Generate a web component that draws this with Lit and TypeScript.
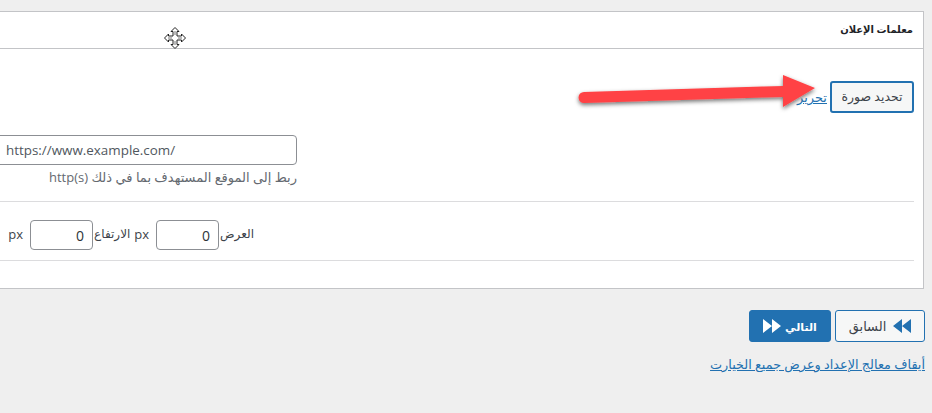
import { LitElement, html, css } from 'lit';
import { customElement } from 'lit/decorators.js';

@customElement('app-root')
export default class AppRoot extends LitElement {
  static styles = css`
    :host {
      display: block;
      position: relative;
      width: 932px;
      height: 413px;
      overflow: hidden;
      background: #efefef;
      font-family: "Open Sans", "DejaVu Sans", sans-serif;
      font-size: 13px;
      color: #3c434a;
    }

    .page {
      direction: rtl;
      padding: 11px 8px 0 0;
    }

    .panel {
      margin-left: -10px;
      height: 278px;
      box-sizing: border-box;
      background: #fff;
      border: 1px solid #c3c4c7;
    }

    .panel-head {
      height: 37px;
      box-sizing: border-box;
      padding: 8px 10px 0 0;
      border-bottom: 1px solid #c3c4c7;
      font-size: 10px;
      font-weight: 700;
      line-height: 18px;
      color: #1d2327;
    }

    .panel-body {
      padding: 32px 9px 0 0;
    }

    .image-row {
      display: flex;
      align-items: center;
      gap: 3px;
      height: 32px;
    }

    .btn {
      display: inline-flex;
      align-items: center;
      justify-content: center;
      box-sizing: border-box;
      border-radius: 3px;
      border: 1px solid #2271b1;
      background: #f6f7f7;
      color: #2271b1;
      font: inherit;
      line-height: 1;
    }

    .image-btn {
      width: 84px;
      height: 32px;
      border-width: 2px;
      color: #3c434a;
      font-size: 12.500px;
    }

    a {
      color: #2271b1;
      text-decoration: underline;
    }

    .url-field {
      margin: 22px 617px 0 0;
      padding-bottom: 15px;
    }

    .text-input {
      box-sizing: border-box;
      display: block;
      direction: ltr;
      width: 307px;
      height: 30px;
      margin-left: -10px;
      padding: 0 8px 0 15px;
      border: 1px solid #8c8f94;
      border-radius: 4px;
      background: #fff;
      color: #50575e;
      font: inherit;
      font-size: 13.400px;
    }

    .hint {
      margin-top: 3px;
      font-size: 13px;
      line-height: 18px;
      color: #646970;
    }

    .size-row {
      display: flex;
      align-items: center;
      box-sizing: border-box;
      height: 60px;
      padding: 8px 660px 0 0;
      border-top: 1px solid #dcdcde;
      border-bottom: 1px solid #dcdcde;
      font-size: 12px;
      white-space: nowrap;
    }

    .size-row span {
      margin-top: -3px;
    }

    .num {
      box-sizing: border-box;
      width: 63px;
      height: 30px;
      margin: 0 1px;
      padding: 0 8px;
      border: 1px solid #8c8f94;
      border-radius: 4px;
      background: #fff;
      color: #2c3338;
      font: inherit;
      font-size: 14px;
      text-align: right;
      direction: ltr;
    }

    .unit {
      margin: 0 6px 0 8px;
      font-size: 13px;
    }

    .size-row .unit + span {
      margin-right: -4px;
    }

    .nav {
      display: flex;
      gap: 4px;
      margin: 21px -1px 0 0;
    }

    .nav .btn {
      height: 32px;
      font-size: 13px;
    }

    .prev {
      width: 90px;
      gap: 7px;
      color: #3c434a;
    }

    .next {
      width: 82px;
      gap: 4px;
      background: #2271b1;
      color: #fff;
      font-weight: 700;
    }

    .nav .next {
      font-size: 11px;
    }

    .stop {
      margin: 13px -1px 0 0;
      font-size: 12.800px;
      line-height: 18px;
    }

    .arrow {
      position: absolute;
      left: 570px;
      top: 65px;
    }

    .move {
      position: absolute;
      left: 163px;
      top: 26px;
    }
  `;

  render() {
    return html`
      <div class="page">
        <div class="panel">
          <div class="panel-head">معلمات الإعلان</div>
          <div class="panel-body">
            <div class="image-row">
              <button class="btn image-btn">تحديد صورة</button>
              <a href="#">تحرير</a>
            </div>
            <div class="url-field">
              <input class="text-input" value="https://www.example.com/" />
              <div class="hint">ربط إلى الموقع المستهدف بما في ذلك http(s)</div>
            </div>
            <div class="size-row">
              <span>العرض</span>
              <input class="num" value="0" />
              <span class="unit">px</span>
              <span>الارتفاع</span>
              <input class="num" value="0" />
              <span class="unit">px</span>
            </div>
          </div>
        </div>
        <div class="nav">
          <button class="btn prev">
            <svg width="18" height="14" viewBox="0 0 18 14"><path d="M9 0v14L0 7zM18 0v14L9 7z" fill="#2271b1"></path></svg>
            <span>السابق</span>
          </button>
          <button class="btn next">
            <span>التالي</span>
            <svg width="18" height="14" viewBox="0 0 18 14"><path d="M0 0v14l9-7zM9 0v14l9-7z" fill="#fff"></path></svg>
          </button>
        </div>
        <div class="stop"><a href="#">أيقاف معالج الإعداد وعرض جميع الخيارت</a></div>
      </div>

      <svg class="arrow" width="256" height="52" viewBox="0 0 256 52">
        <defs>
          <filter id="shadow" x="-5%" y="-20%" width="110%" height="150%">
            <feDropShadow dx="0" dy="2" stdDeviation="2" flood-color="#000" flood-opacity="0.55"></feDropShadow>
          </filter>
        </defs>
        <path
          d="M14 27L213 21V10L245 23L213 42V32L14 38A5.5 5.5 0 0 1 14 27Z"
          fill="#ff4245"
          filter="url(#shadow)"
        ></path>
      </svg>

      <svg class="move" width="24" height="24" viewBox="0 0 24 24">
        <path
          d="M12 1.500L16 5.500H14V10H18.500V8L22.500 12L18.500 16V14H14V18.500H16L12 22.500L8 18.500H10V14H5.500V16L1.500 12L5.500 8V10H10V5.500H8Z"
          fill="#fff"
          stroke="#222"
          stroke-width="1"
        ></path>
        <path d="M12 5V9M12 15V19M5 12H9M15 12H19" stroke="#777" stroke-width="1" fill="none"></path>
      </svg>
    `;
  }
}
